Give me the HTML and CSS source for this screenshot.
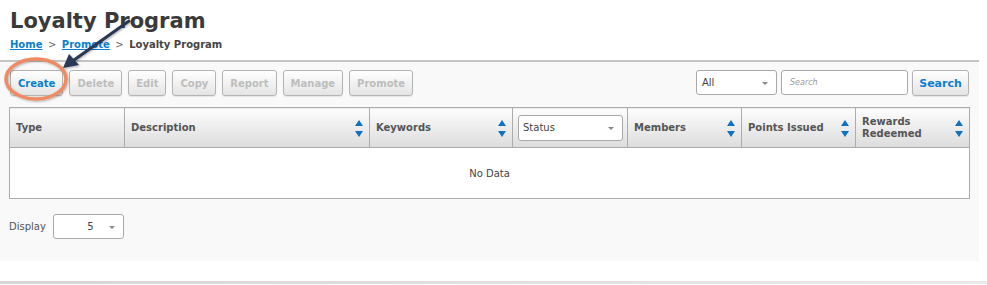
FILE: index.html
```html
<!DOCTYPE html>
<html lang="en">
<head>
    <meta charset="UTF-8">
    <title>Loyalty Program</title>
    <link rel="stylesheet" href="styles.css">
</head>
<body>
    <div class="page-head">
        <h1>Loyalty Program</h1>
        <div class="crumbs">
            <a href="#">Home</a> <span class="sep">&gt;</span>
            <a href="#">Promote</a> <span class="sep">&gt;</span>
            <span class="current">Loyalty Program</span>
        </div>
    </div>

    <div class="panel">
        <!-- TOOLBAR -->
        <div class="toolbar">
            <div class="actions">
                <button class="btn btn-active">Create</button>
                <button class="btn" disabled>Delete</button>
                <button class="btn" disabled>Edit</button>
                <button class="btn" disabled>Copy</button>
                <button class="btn" disabled>Report</button>
                <button class="btn" disabled>Manage</button>
                <button class="btn" disabled>Promote</button>
            </div>
            <div class="search">
                <div class="dropdown dd-all">All <span class="caret"></span></div>
                <div class="search-box">Search</div>
                <button class="btn btn-active btn-search">Search</button>
            </div>
        </div>

        <!-- GRID -->
        <table class="grid">
            <colgroup>
                <col style="width:115px">
                <col style="width:245px">
                <col style="width:143px">
                <col style="width:115px">
                <col style="width:114px">
                <col style="width:114px">
                <col>
            </colgroup>
            <thead>
                <tr>
                    <th>Type</th>
                    <th class="sortable">Description <span class="sort"><i class="up"></i><i class="down"></i></span></th>
                    <th class="sortable">Keywords <span class="sort"><i class="up"></i><i class="down"></i></span></th>
                    <th class="filter"><div class="dropdown dd-status">Status <span class="caret"></span></div></th>
                    <th class="sortable">Members <span class="sort"><i class="up"></i><i class="down"></i></span></th>
                    <th class="sortable">Points Issued <span class="sort"><i class="up"></i><i class="down"></i></span></th>
                    <th class="sortable">Rewards<br>Redeemed <span class="sort"><i class="up"></i><i class="down"></i></span></th>
                </tr>
            </thead>
            <tbody>
                <tr><td colspan="7" class="empty">No Data</td></tr>
            </tbody>
        </table>

        <div class="pager">
            <span>Display</span>
            <div class="dropdown dd-display">5 <span class="caret"></span></div>
        </div>
    </div>

    <div class="bottom-line"></div>

    <!-- annotation: circle + arrow -->
    <svg class="callout" width="150" height="110" viewBox="0 0 150 110">
        <defs>
            <filter id="sh" x="-20%" y="-20%" width="140%" height="140%">
                <feDropShadow dx="1" dy="1" stdDeviation="1" flood-color="#000" flood-opacity="0.3"/>
            </filter>
        </defs>
        <ellipse cx="36" cy="79" rx="30" ry="20" fill="none" stroke="#ef8a62" stroke-width="3.5" filter="url(#sh)"/>
        <g filter="url(#sh)">
            <line x1="129" y1="21" x2="74" y2="60" stroke="#2b3852" stroke-width="3" stroke-linecap="round"/>
            <polygon points="63,68 69,54 79,65" fill="#2b3852"/>
        </g>
    </svg>
</body>
</html>
```

FILE: styles.css
```css
body {
    margin: 0;
    background: #fff;
    font-family: "DejaVu Sans", Verdana, sans-serif;
    color: #444;
    position: relative;
}
.page-head {
    height: 60px;
    padding: 0 10px;
    box-sizing: border-box;
}
h1 {
    margin: 0;
    padding-top: 8px;
    font-size: 21px;
    line-height: 26px;
    color: #3a3a3a;
}
.crumbs {
    margin-top: 5px;
    font-size: 10px;
    font-weight: bold;
    color: #444;
}
.crumbs a {
    color: #0a7fd1;
    text-decoration: underline;
}
.crumbs .sep {
    font-weight: normal;
    color: #666;
    margin: 0 2px;
}
.panel {
    width: 979px;
    height: 201px;
    box-sizing: border-box;
    background: #f9f9f9;
    border-top: 2px solid #c4c4c4;
    padding: 8px 10px 0 9px;
}
.toolbar {
    display: flex;
    justify-content: space-between;
    align-items: center;
    height: 26px;
}
.actions, .search {
    display: flex;
    gap: 6px;
}
.actions {
    padding-left: 1px;
}
.search {
    gap: 4px;
}
.btn {
    height: 26px;
    padding: 0 7px;
    font-family: "DejaVu Sans", Verdana, sans-serif;
    font-size: 10px;
    font-weight: bold;
    color: #bdbdbd;
    background: linear-gradient(#ffffff, #e4e4e4);
    border: 1px solid #b4b4b4;
    border-radius: 3px;
    box-shadow: 0 1px 1px rgba(0,0,0,0.08);
}
.btn-active {
    color: #0a7fd1;
}
.btn-search {
    width: 57px;
    padding: 0;
    font-size: 11px;
}
.dropdown {
    position: relative;
    box-sizing: border-box;
    background: #fff;
    border: 1px solid #a9a9a9;
    border-radius: 3px;
    font-size: 10px;
    color: #444;
    display: flex;
    align-items: center;
    padding: 0 5px;
}
.caret {
    position: absolute;
    right: 8px;
    top: 50%;
    margin-top: -1px;
    border-left: 3px solid transparent;
    border-right: 3px solid transparent;
    border-top: 3px solid #888;
}
.dd-all {
    width: 81px;
    height: 25px;
}
.search-box {
    width: 127px;
    height: 25px;
    box-sizing: border-box;
    background: #fff;
    border: 1px solid #a9a9a9;
    border-radius: 3px;
    font-size: 8px;
    font-style: italic;
    color: #999;
    display: flex;
    align-items: center;
    padding-left: 8px;
}
.grid {
    margin-top: 11px;
    width: 961px;
    border-collapse: collapse;
    table-layout: fixed;
    background: #fff;
    border: 1px solid #acacac;
}
.grid th {
    position: relative;
    height: 39px;
    padding: 0 6px;
    text-align: left;
    font-size: 10px;
    line-height: 12px;
    font-weight: bold;
    color: #555;
    background: linear-gradient(#fdfdfd, #dcdcdc);
    border: 1px solid #acacac;
}
.grid th.sortable {
    padding-right: 22px;
}
.grid th.filter {
    padding: 0 5px;
}
.sort {
    position: absolute;
    right: 6px;
    top: 12px;
    display: flex;
    flex-direction: column;
    gap: 5px;
}
.sort i {
    display: block;
    border-left: 4px solid transparent;
    border-right: 4px solid transparent;
}
.sort .up {
    border-bottom: 6px solid #1170c0;
}
.sort .down {
    border-top: 6px solid #1170c0;
}
.dd-status {
    width: 105px;
    height: 26px;
    font-weight: normal;
    padding-left: 4px;
}
.empty {
    height: 48px;
    text-align: center;
    font-size: 10px;
    color: #444;
}
.pager {
    margin-top: 15px;
    display: flex;
    align-items: center;
    gap: 7px;
    font-size: 10px;
    color: #555;
}
.dd-display {
    width: 71px;
    height: 25px;
    justify-content: center;
    padding: 0 0 0 4px;
}
.bottom-line {
    margin-top: 20px;
    height: 3px;
    width: 987px;
    background: linear-gradient(to right, #d6d6d6, #eaeaea);
}
.callout {
    position: absolute;
    left: 0;
    top: 0;
}
```
